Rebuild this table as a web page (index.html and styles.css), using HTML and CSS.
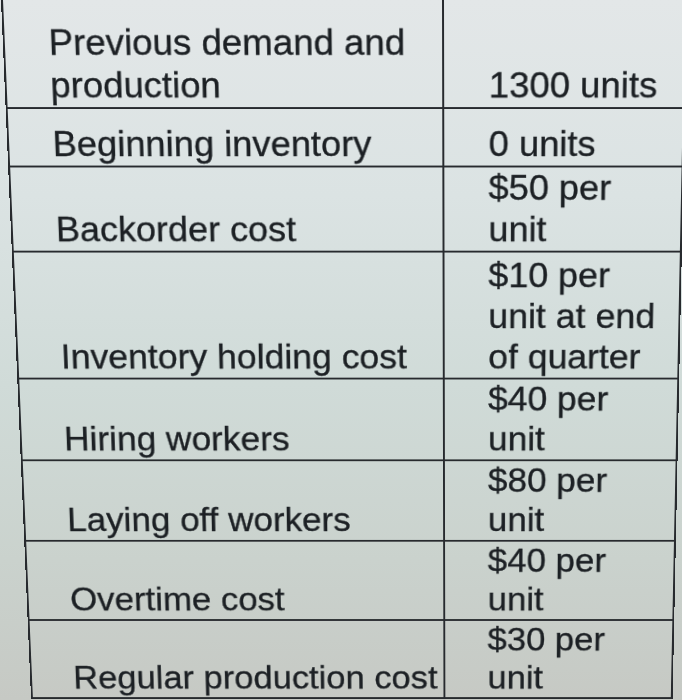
FILE: index.html
```html
<!DOCTYPE html>
<html lang="en">
<head>
<meta charset="utf-8">
<title>Production cost table</title>
<link rel="stylesheet" href="styles.css">
</head>
<body>
<div class="stage">
  <table class="sheet">
    <colgroup><col class="c1"><col class="c2"></colgroup>
    <tr class="r1"><td class="label">Previous demand and<br>production</td><td class="value">1300 units</td></tr>
    <tr class="r2"><td class="label">Beginning inventory</td><td class="value">0 units</td></tr>
    <tr><td class="label">Backorder cost</td><td class="value">$50 per<br>unit</td></tr>
    <tr class="r4"><td class="label">Inventory holding cost</td><td class="value">$10 per<br>unit at end<br>of quarter</td></tr>
    <tr><td class="label">Hiring workers</td><td class="value">$40 per<br>unit</td></tr>
    <tr><td class="label">Laying off workers</td><td class="value">$80 per<br>unit</td></tr>
    <tr><td class="label">Overtime cost</td><td class="value">$40 per<br>unit</td></tr>
    <tr><td class="label">Regular production cost</td><td class="value">$30 per<br>unit</td></tr>
  </table>
</div>
</body>
</html>
```
FILE: styles.css
```css
html, body {
  margin: 0;
  padding: 0;
  height: 700px;
  overflow: hidden;
}
body {
  background: linear-gradient(180deg, #e3e7e8 0%, #dbe3e3 28%, #d0dbd8 55%, #cad2cd 80%, #c6c9c4 100%);
  font-family: "Liberation Sans", Arial, sans-serif;
  color: #1c2024;
}
.stage {
  perspective: 2000px;
  perspective-origin: 465px 0px;
  width: 682px;
}
.sheet {
  transform-origin: 50% 0;
  transform: rotateX(-10.5deg);
  border-collapse: collapse;
  table-layout: fixed;
  width: 684px;
  margin-left: 1px;
  font-size: 36.8px;
  line-height: 44px;
  -webkit-text-stroke: 0.35px #1c2024;
}
.c1 { width: 441px; }
.c2 { width: 243px; }
.sheet td {
  border: 2px solid #272a2e;
  vertical-align: bottom;
  padding: 0;
  white-space: nowrap;
}
.sheet tr:first-child td { border-top: none; }
.label { padding-left: 44px !important; }
.value { padding-left: 45px !important; }
.r1 td { padding-top: 22px !important; }
.r2 td { padding-top: 15px !important; }
.r4 td { padding-top: 3px !important; }
```
